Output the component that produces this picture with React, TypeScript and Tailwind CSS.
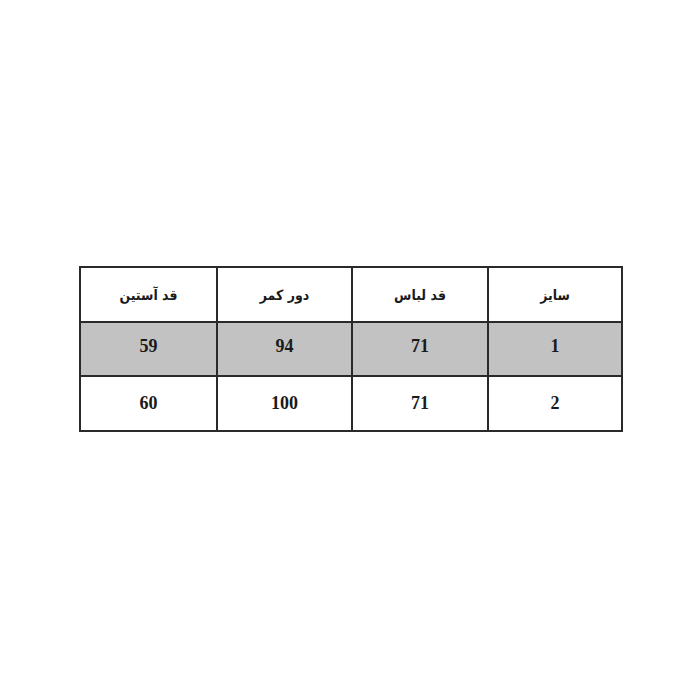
import React from "react";

const rows: { cells: string[]; shaded: boolean; pad: string }[] = [
  { cells: ["1", "71", "94", "59"], shaded: true, pad: "pb-[6px]" },
  { cells: ["2", "71", "100", "60"], shaded: false, pad: "pb-[1px]" },
];

const headers = ["سایز", "قد لباس", "دور کمر", "قد آستین"];

export default function App() {
  return (
    <div className="min-h-[700px] w-[700px] bg-white pt-[266px] pl-[79px]">
      {/* Size chart table, read right-to-left */}
      <div
        dir="rtl"
        className="grid w-fit grid-cols-[132px_134px_133px_135px] grid-rows-[53px_52px_53px] gap-[2px] bg-[#2a2a2a] p-[2px]"
      >
        {headers.map((h) => (
          <div
            key={h}
            className="flex items-center justify-center bg-white pt-[2px] font-['DejaVu_Sans_Condensed','DejaVu_Sans',sans-serif] text-[14px] font-bold text-[#1a1a1a]"
          >
            {h}
          </div>
        ))}
        {rows.map((row, i) =>
          row.cells.map((c, j) => (
            <div
              key={`${i}-${j}`}
              className={`flex items-center justify-center font-['Liberation_Serif',serif] text-[18px] font-bold text-[#1a1a1a] ${row.pad} ${
                row.shaded ? "bg-[#c2c2c2]" : "bg-white"
              }`}
            >
              {c}
            </div>
          ))
        )}
      </div>
    </div>
  );
}
